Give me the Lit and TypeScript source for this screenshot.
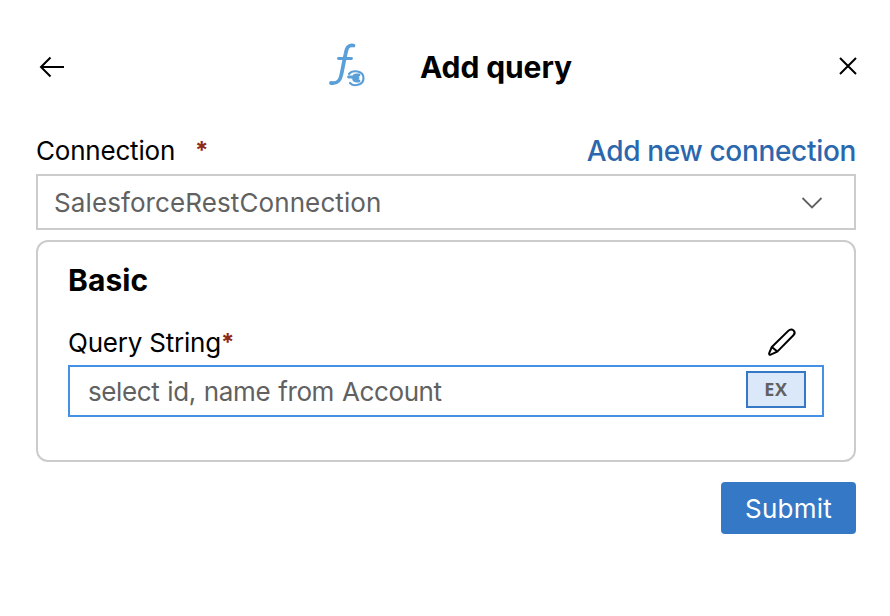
import { LitElement, html, css } from "lit";
import { customElement } from "lit/decorators.js";

@customElement("app-root")
export class AppRoot extends LitElement {
  static styles = css`
    :host {
      display: block;
      box-sizing: border-box;
      width: 890px;
      height: 616px;
      padding: 40px 34px 0 36px;
      background: #fff;
      color: #000;
      font-family: Inter, "Liberation Sans", sans-serif;
      font-size: 26px;
      line-height: 32px;
      overflow: hidden;
    }
    * { box-sizing: border-box; }
    svg { display: block; }
    .header { display: flex; align-items: center; height: 54px; margin-right: -4px; }
    .back { margin-left: 2px; }
    .logo { margin: -4px 0 0 262px; }
    h1, h2 { margin: 0; font-size: 30px; font-weight: 700; white-space: nowrap; }
    h1 { margin-left: 54px; letter-spacing: -0.1px; }
    h2 { line-height: 37px; letter-spacing: 0.1px; }
    .close { margin-left: auto; }
    .labels { display: flex; align-items: center; justify-content: space-between; height: 32px; margin-top: 41px; }
    label { display: flex; }
    .req { color: #8f2a16; font-size: 24px; line-height: 31px; font-weight: 700; }
    .conn .req { margin-left: 20px; }
    .conn { letter-spacing: -0.2px; }
    .link { color: #2b67ad; font-size: 28px; font-weight: 500; letter-spacing: -0.32px; text-decoration: none; }
    .select {
      display: flex; align-items: center; justify-content: space-between;
      height: 56px; margin-top: 7px; padding: 0 30px 0 16px;
      border: 2px solid #ccc; color: #616161;
    }
    .value { padding-top: 2px; letter-spacing: 0.1px; }
    .card { height: 222px; margin-top: 10px; padding: 20px 30px 0; border: 2px solid #ccc; border-radius: 12px; }
    .field-head { display: flex; align-items: center; justify-content: space-between; height: 32px; margin-top: 27px; padding-right: 26px; }
    .qs { padding-top: 2px; letter-spacing: -0.22px; }
    .input {
      display: flex; align-items: center; justify-content: space-between;
      height: 52px; margin-top: 7px; padding: 0 16px 0 18px;
      border: 2px solid #4390e5; color: #616161;
    }
    .query { padding-top: 2px; letter-spacing: -0.38px; word-spacing: 1px; }
    .ex {
      width: 60px; height: 37px; margin-top: -3px; padding: 0; border: 2px solid #3578c6;
      background: #dae8fa; color: #616161; font: 700 18px/33px "Open Sans", sans-serif; letter-spacing: 0.8px; text-align: center;
    }
    .actions { display: flex; justify-content: flex-end; margin-top: 20px; }
    .submit {
      width: 135px; height: 52px; padding: 2px 0 0; border: 0; border-radius: 4px;
      background: #3578c6; color: #fff; font: 400 26px/50px Inter, sans-serif; letter-spacing: 0.2px;
    }
  `;

  render() {
    return html`
      <header class="header">
        <svg class="back" width="28" height="28" viewBox="0 0 28 28" fill="none" stroke="#000" stroke-width="2">
          <path d="M26 14H3M12.5 4.500 3 14l9.500 9.500" />
        </svg>
        <svg class="logo" width="38" height="46" viewBox="0 0 38 46" fill="none" stroke="#5b9fd8" stroke-linecap="round">
          <path d="M25.500 3.500C20 2.500 18.500 6 17.500 12L13.500 32c-1.200 6.500-3.500 10-10.500 9" stroke-width="3.800" />
          <path d="M10.500 16.500h13" stroke-width="2.800" />
          <path d="M21 32c3.500-4.500 14.500-3.500 14.500 4 0 7.500-10 9-13.500 5" stroke-width="2.200" />
          <path d="M20.500 35h4.500M31 33h-2.500c-4 0-4 6 0 6H31M26 36h4" stroke-width="2.800" />
        </svg>
        <h1>Add query</h1>
        <svg class="close" width="24" height="24" viewBox="0 0 24 24" fill="none" stroke="#000" stroke-width="2">
          <path d="m4 3 16 16M20 3 4 19" />
        </svg>
      </header>
      <div class="labels">
        <label class="conn"><span>Connection</span><span class="req">*</span></label>
        <a class="link">Add new connection</a>
      </div>
      <div class="select">
        <span class="value">SalesforceRestConnection</span>
        <svg width="24" height="14" viewBox="0 0 24 14" fill="none" stroke="#616161" stroke-width="1.800">
          <path d="m2.500 3 9.500 9.500 9.500-9.500" />
        </svg>
      </div>
      <section class="card">
        <h2>Basic</h2>
        <div class="field-head">
          <label class="qs"><span>Query String</span><span class="req">*</span></label>
          <svg width="32" height="32" viewBox="0 0 32 32" fill="none" stroke="#000" stroke-width="2" stroke-linejoin="round">
            <path d="M5.800 21 22.500 4.600c1.600-1.600 3.700-1.500 5-.2 1.400 1.400 1.400 3.400-.1 4.900L11.300 25.600 4.700 28.600c-1.100.5-1.900-.4-1.500-1.400ZM5.800 21l5.500 4.600" />
          </svg>
        </div>
        <div class="input">
          <span class="query">select id, name from Account</span>
          <button class="ex">EX</button>
        </div>
      </section>
      <div class="actions"><button class="submit">Submit</button></div>
    `;
  }
}
